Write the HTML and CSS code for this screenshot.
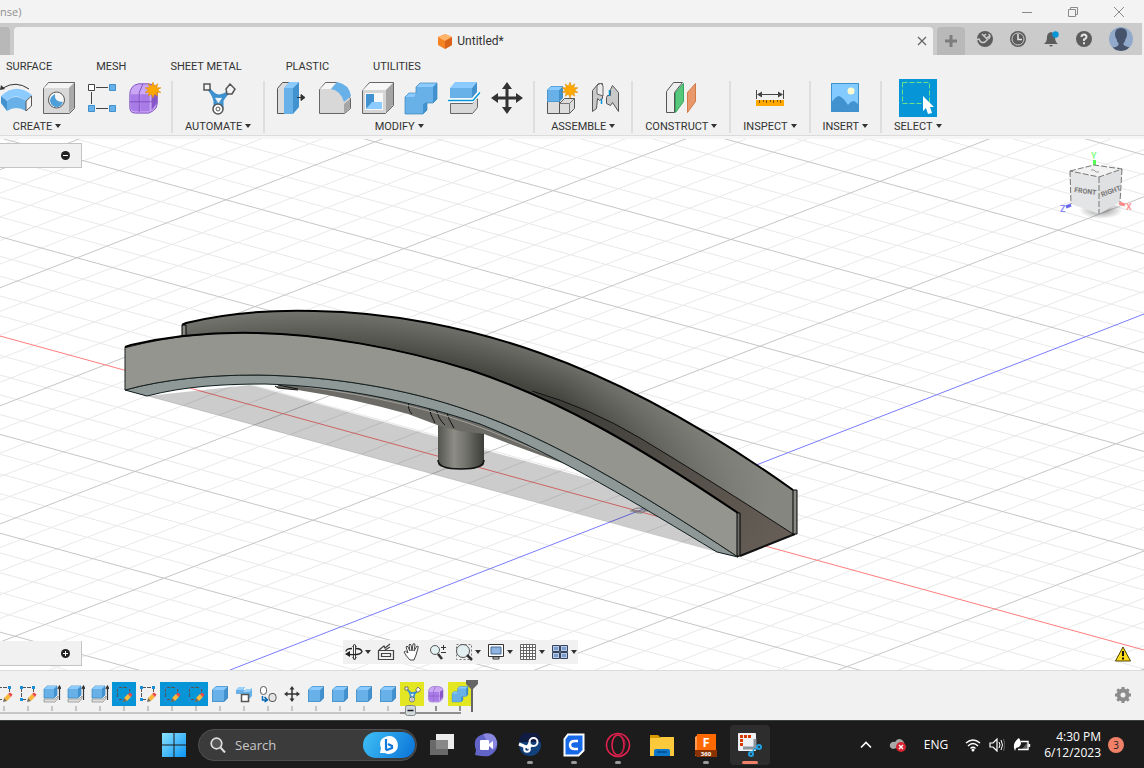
FILE: index.html
```html
<!DOCTYPE html>
<html lang="en">
  <head>
    <meta charset="UTF-8" />
    <meta name="viewport" content="width=device-width, initial-scale=1.0" />
    <title>Untitled*</title>
    <link rel="stylesheet" href="styles.css">
  </head>

  <body>
    <!-- shared icon shapes -->
    <svg class="defs" width="0" height="0" aria-hidden="true">
      <defs>
        <linearGradient id="winGrad" x1="0" y1="0" x2="1" y2="1">
          <stop offset="0" stop-color="#8be4ff" />
          <stop offset="1" stop-color="#0a93f5" />
        </linearGradient>
        <symbol id="star" viewBox="0 0 16 16">
          <path d="M8 0l1.500 4.200L12.800 1.800 11.700 5.800 16 5.700 12.600 8 16 10.500 11.700 10.300 12.900 14.200 9.500 12 8 16 6.500 12 3.200 14.200 4.300 10.300 0 10.500 3.400 8 0 5.700 4.300 5.800 3.200 1.800 6.500 4.200z" fill="#ffa800" stroke="#d98a00" stroke-width=".5" />
        </symbol>
        <symbol id="cube" viewBox="0 0 16 16">
          <path d="M0 4l4-4h12l-4 4z" fill="#8ccbff" />
          <path d="M12 4l4-4v12l-4 4z" fill="#4192ce" />
          <path d="M0 4h12v12H0z" fill="#67b0e8" />
          <path d="M.5 4L4 .5h11.500V12L12 15.500H.5z" fill="none" stroke="#3a86bf" stroke-width=".6" />
        </symbol>
        <symbol id="combine" viewBox="0 0 36 36">
          <path d="M2 17l4-4h7V7l4-4h17v16l-4 4h-6v7l-4 4H2z" fill="#67b0e8" />
          <path d="M2 17l4-4h7l-2 4zM13 7l4-4h17l-4 4z" fill="#8ccbff" />
          <path d="M30 7l4-4v16l-4 4zM20 24l4-2v8l-4 4z" fill="#4192ce" />
          <path d="M2 17l4-4h7V7l4-4h17v16l-4 4h-6v7l-4 4H2z" fill="none" stroke="#3b86bd" stroke-width=".7" />
        </symbol>
        <symbol id="form" viewBox="0 0 36 36">
          <path d="M3 14q0-9 9-11h11q9 1 9 8v13q0 5-5 8l-4 2H9q-6 0-6-6z" fill="#caa6f5" stroke="#7b4fc0" />
          <path d="M4 14h9v18H9q-5 0-5-5zM14 14h10v18H14z" fill="#a97be6" />
          <path d="M26 13l6-3v13l-6 8z" fill="#8858ca" />
          <path d="M3 22h22l7-4M13 33V12l4-9" fill="none" stroke="#7b4fc0" />
        </symbol>
        <symbol id="branch" viewBox="0 0 36 36">
          <path d="M8 8q6 8 11 8t11-5q-7 6-8 10v7h-7v-7q-1-6-7-13z" fill="#5aa9e2" stroke="#3c90cd" stroke-width="3" stroke-linejoin="round" />
          <path d="M15 18h7l-3.500 5z" fill="#f1f1f1" />
          <path d="M4 4h6v6H4zM30 4l5 5-3 5h-5l-1-5z" fill="#f5f5f5" stroke="#555" stroke-width="1.500" />
          <circle cx="18" cy="29" r="5" fill="#fff" stroke="#555" stroke-width="1.500" />
          <circle cx="18" cy="29" r="2" fill="none" stroke="#555" />
        </symbol>
        <symbol id="move" viewBox="0 0 36 36">
          <path d="M18 2l5 7h-3.500v7.500H27V13l7 5-7 5v-3.500h-7.500V27H23l-5 7-5-7h3.500v-7.500H9V23l-7-5 7-5v3.500h7.500V9H13z" fill="#333" />
        </symbol>
        <symbol id="sketch" viewBox="0 0 18 18">
          <path d="M3 2.500h11M2.500 3v11M3 14.500h5M14.500 3v5" fill="none" stroke="#555" stroke-dasharray="4 1" />
          <path d="M1 1h3v3H1zM13 1h3v3h-3zM1 13h3v3H1z" class="pt" />
          <path d="M9 13l4-4 3 3-4 4z" fill="#fbb93c" />
          <path d="M13 9l2-1.500 2.500 2L16 12z" fill="#f04848" />
          <path d="M9 13l-1 4 4-1z" fill="#7a6a50" />
        </symbol>
        <symbol id="extrude" viewBox="0 0 18 18">
          <path d="M1 14h11l3-3v2l-3 4H1z" fill="#ddd" stroke="#888" stroke-width=".7" />
          <path d="M1 4l3-3h10v9l-3 3H1z" fill="#67b0e8" stroke="#3b86bd" stroke-width=".7" />
          <path d="M1 4l3-3h10l-3 3z" fill="#8ccbff" />
          <path d="M11 4l3-3v9l-3 3z" fill="#4192ce" />
          <path d="M16.500 15V2M14.800 4l1.700-3 1.500 3" fill="none" stroke="#333" stroke-width="1.200" />
        </symbol>
      </defs>
    </svg>

    <header class="titlebar">
      <span class="window-title">nse)</span>
      <button class="win-btn" aria-label="Minimize"><svg width="12" height="12" viewBox="0 0 12 12"><path d="M1 6.500h10" /></svg></button>
      <button class="win-btn" aria-label="Restore"><svg width="12" height="12" viewBox="0 0 12 12"><path d="M1.500 3.500h7v7h-7zM3.500 3V1.500h7v7H9" /></svg></button>
      <button class="win-btn" aria-label="Close"><svg width="12" height="12" viewBox="0 0 12 12"><path d="M1 1l10 10M11 1L1 11" /></svg></button>
    </header>

    <nav class="doc-tabs">
      <div class="tab-back"></div>
      <div class="tab-active">
        <span class="tab-name">
          <svg width="16" height="16" viewBox="0 0 16 16">
            <path d="M8 1l7 3v8l-7 4-7-4V4z" fill="#f58220" />
            <path d="M8 1l7 3-7 4-7-4z" fill="#ffb36b" />
            <path d="M8 8l7-4v8l-7 4z" fill="#d9631a" />
          </svg>
          Untitled*
        </span>
        <button class="tab-close" aria-label="Close tab"><svg width="10" height="10" viewBox="0 0 10 10"><path d="M1 1l8 8M9 1L1 9" stroke="#666" stroke-width="1.300" /></svg></button>
      </div>
      <button class="tab-new" aria-label="New tab"><svg width="14" height="14" viewBox="0 0 14 14"><path d="M7 1v12M1 7h12" stroke="#7d7d7d" stroke-width="3" /></svg></button>
      <div class="tab-tools">
        <button aria-label="Extensions"><svg width="18" height="18" viewBox="0 0 18 18"><circle cx="9" cy="9" r="8" fill="#5c5c5c" /><path d="M0 10l3-1q2 5 6 3l3-3M6 4l6 6M12.500 9q3-3 0-5M7.500 6.500L10 4M10 9l3-3" fill="none" stroke="#cbcbcb" stroke-width="1.500" /></svg></button>
        <button aria-label="Job status"><svg width="18" height="18" viewBox="0 0 18 18"><circle cx="9" cy="9" r="8" fill="#5c5c5c" /><circle cx="9" cy="9" r="6" fill="none" stroke="#cbcbcb" /><path d="M9 4v5.500h4" fill="none" stroke="#e4e4e4" stroke-width="1.500" /></svg></button>
        <button aria-label="Notifications"><svg width="18" height="18" viewBox="0 0 18 18"><path d="M2 14q3-2 3-7 0-4 4-5 4 1 4 5 0 5 3 7zM7 15h4l-2 2z" fill="#5c5c5c" /><circle cx="13.500" cy="4.500" r="3.200" fill="#0696d7" /></svg></button>
        <button aria-label="Help"><svg width="18" height="18" viewBox="0 0 18 18"><circle cx="9" cy="9" r="8" fill="#5c5c5c" /><path d="M6.500 7q0-2.500 2.500-2.500T11.500 7Q11.500 8.500 9 9.500v1.500M9 12.200v2" fill="none" stroke="#e4e4e4" stroke-width="2" /></svg></button>
        <button class="avatar" aria-label="Account"><svg width="24" height="24" viewBox="0 0 24 24"><path d="M12 1q6 0 6 6 0 3-1.500 5-.5 3-2 4v2q4 2 6 2.500Q17 24 12 24t-8.500-3.500Q8 20 9.500 18v-2q-1.500-1-2-4Q6 10 6 7q0-6 6-6z" fill="#46536a" /></svg></button>
      </div>
    </nav>

    <nav class="ribbon-tabs">
      <a href="#surface">SURFACE</a>
      <a href="#mesh">MESH</a>
      <a href="#sheet-metal">SHEET METAL</a>
      <a href="#plastic">PLASTIC</a>
      <a href="#utilities">UTILITIES</a>
    </nav>

    <div class="ribbon">
      <section class="group group-create">
        <div class="tools">
          <button aria-label="Revolve"><svg width="36" height="36" viewBox="0 0 36 36">
            <path d="M3 16Q18 2 34 15l-6 6Q17 12 9 21z" fill="#8ccbff" />
            <path d="M9 21q8-8 19 0v10q-10-6-19 0z" fill="#67b0e8" />
            <path d="M3 16l6 5v10l-6-8z" fill="#4192ce" />
            <path d="M28 21l5.500-5v10L28 31z" fill="#f5f5f5" stroke="#555" />
            <path d="M5 8q13-8 26 1" fill="none" stroke="#333" /><path d="M2 10l1-5 4 4z" fill="#333" />
          </svg></button>
          <button aria-label="Hole"><svg width="36" height="36" viewBox="0 0 36 36">
            <path d="M2.500 8.500l5-6h26v26l-5 5h-26z" fill="#d8d8d8" stroke="#666" />
            <path d="M3 8l5-5h25l-5 5z" fill="#f4f4f4" /><path d="M28 8l5-5v25l-5 5z" fill="#aaa" />
            <circle cx="15.500" cy="20" r="8" fill="#f5f5f5" stroke="#555" />
            <path d="M14 14q-1 8 8 8-2 6-8 5-5-2-5-7 1-4 5-6z" fill="#4d9fda" />
          </svg></button>
          <button aria-label="Rectangular pattern"><svg width="36" height="36" viewBox="0 0 36 36">
            <path d="M12 7.500h12M12 28.500h12M7.500 12v12" stroke="#444" />
            <path d="M4.500 4.500h6v6h-6z" fill="#fff" stroke="#444" />
            <path d="M25.500 4.500h6v6h-6zM25.500 25.500h6v6h-6zM4.500 25.500h6v6h-6z" fill="#67b0e8" stroke="#3c90cd" />
          </svg></button>
          <button aria-label="Create form"><svg width="36" height="36" viewBox="0 0 36 36"><use href="#form" width="34" height="36" /><use href="#star" x="18" y="2" width="16" height="16" /></svg></button>
        </div>
        <button class="menu">CREATE</button>
      </section>

      <section class="group">
        <div class="tools">
          <button aria-label="Automated modeling"><svg width="36" height="36" viewBox="0 0 36 36"><use href="#branch" /></svg></button>
        </div>
        <button class="menu">AUTOMATE</button>
      </section>

      <section class="group">
        <div class="tools">
          <button aria-label="Press pull"><svg width="36" height="36" viewBox="0 0 36 36">
            <path d="M3.500 8.500l5-6h7l-5 6v25h-7z" fill="#ddd" stroke="#555" />
            <path d="M10 8h9v26h-9z" fill="#67b0e8" /><path d="M10 8l5-6h10l-6 6z" fill="#8ccbff" /><path d="M19 8l6-6v25l-6 7z" fill="#4192ce" />
            <path d="M23 17.500h5M31 17.500l-4-3v6z" stroke="#333" fill="#333" />
          </svg></button>
          <button aria-label="Fillet"><svg width="36" height="36" viewBox="0 0 36 36">
            <path d="M2.500 9.500l6-7h11l14 16v10l-6 5h-25z" fill="#d8d8d8" stroke="#666" />
            <path d="M3 9l6-6h10l-5 6z" fill="#f6f6f6" /><path d="M27 24l6-5v9l-6 5z" fill="#a5a5a5" />
            <path d="M14 9l6-7q12 2 14 14l-7 6Q24 11 14 9z" fill="#67b0e8" />
          </svg></button>
          <button aria-label="Shell"><svg width="36" height="36" viewBox="0 0 36 36">
            <path d="M2.500 10.500l7-8h24v23l-8 8h-23z" fill="#d5d5d5" stroke="#666" />
            <path d="M3 10l7-7h23l-7 7z" fill="#f7f7f7" /><path d="M26 10l7-7v22l-7 8z" fill="#a5a5a5" />
            <path d="M5 13h18v17H5z" fill="#f7f7f7" /><path d="M6 14h8v8l-8 7z" fill="#4192ce" /><path d="M6 29l6-7h10v7z" fill="#8ccbff" />
          </svg></button>
          <button aria-label="Combine"><svg width="36" height="36" viewBox="0 0 36 36"><use href="#combine" /></svg></button>
          <button aria-label="Split body"><svg width="36" height="36" viewBox="0 0 36 36">
            <path d="M4 8h22v10H4z" fill="#67b0e8" /><path d="M4 8l5-6h22l-5 6z" fill="#8ccbff" /><path d="M26 8l5-6v10l-5 6z" fill="#4192ce" />
            <path d="M4.500 23.500h22l5-5v9l-5 6h-22z" fill="#d8d8d8" stroke="#666" />
            <path d="M2 20.500h25l7-8" fill="none" stroke="#fff" stroke-width="4" /><path d="M2 20.500h25l7-8" fill="none" stroke="#0696d7" stroke-width="1.500" />
          </svg></button>
          <button aria-label="Move"><svg width="36" height="36" viewBox="0 0 36 36"><use href="#move" /></svg></button>
        </div>
        <button class="menu">MODIFY</button>
      </section>

      <section class="group">
        <div class="tools">
          <button aria-label="New component"><svg width="36" height="36" viewBox="0 0 36 36">
            <path d="M3.500 21.500h12v12h-12zM15.500 23.500l5-5h10v10l-5 5h-10z" fill="#ddd" stroke="#555" />
            <path d="M15.500 23.500h10l5-5M25.500 23.500v10" fill="none" stroke="#777" />
            <use href="#cube" x="3" y="6" width="16" height="16" /><use href="#star" x="18" y="2" width="16" height="16" />
          </svg></button>
          <button aria-label="Joint"><svg width="36" height="36" viewBox="0 0 36 36">
            <path d="M5.500 10.500l6-7h4v15l-3 2-2-2-1 10-4 3z" fill="#c9c9c9" stroke="#555" />
            <path d="M10 6q4-5 6 0v10l-6-2z" fill="#ececec" stroke="#666" />
            <path d="M31.500 12.500l-6-7-2 4v6q-4-1-4 2v6l4 2 2-3 6 9z" fill="#c9c9c9" stroke="#555" />
            <path d="M14.500 19v5M22.500 10v6" stroke="#0696d7" stroke-width="1.500" />
          </svg></button>
        </div>
        <button class="menu">ASSEMBLE</button>
      </section>

      <section class="group">
        <div class="tools">
          <button aria-label="Offset plane"><svg width="36" height="36" viewBox="0 0 36 36">
            <path d="M3.500 11.500l7-9h9l-8 10v20h-8z" fill="#eee" stroke="#555" />
            <path d="M12.500 12.500l8-9v18l-8 11z" fill="#57c87b" stroke="#37a75d" /><path d="M24.500 12.500l8-9v18l-8 11z" fill="#e8986a" stroke="#d07a48" />
          </svg></button>
        </div>
        <button class="menu">CONSTRUCT</button>
      </section>

      <section class="group">
        <div class="tools">
          <button aria-label="Measure"><svg width="36" height="36" viewBox="0 0 36 36">
            <path d="M4.500 10v9M31.500 10v9M6 14.500h24" stroke="#444" /><path d="M5 14.500l5-3v6zM31 14.500l-5-3v6z" fill="#444" />
            <path d="M4 20h28v6H4z" fill="#ffa800" /><path d="M7.500 20v3M11.500 20v2M14.500 20v3M18.500 20v2M21.500 20v3M25.500 20v2M28.500 20v3" stroke="#7b5200" />
          </svg></button>
        </div>
        <button class="menu">INSPECT</button>
      </section>

      <section class="group">
        <div class="tools">
          <button aria-label="Insert image"><svg width="36" height="36" viewBox="0 0 36 36">
            <path d="M4 3h28v29H4z" fill="#82caff" /><circle cx="24" cy="11" r="3.500" fill="#fffbd0" />
            <path d="M4 23q5-7 8-7 4 1 9 9 2-3 5-4 3 0 6 5v6H4z" fill="#4192ce" /><path d="M4.500 3.500h27v28h-27z" fill="none" stroke="#3e92cc" />
          </svg></button>
        </div>
        <button class="menu">INSERT</button>
      </section>

      <section class="group">
        <div class="tools">
          <button class="active" aria-label="Select"><svg width="38" height="38" viewBox="0 0 38 38">
            <path d="M3.500 3.500h27v21h-27z" fill="none" stroke="#6fe08a" stroke-dasharray="5 2" />
            <path d="M24 17v15l3-3 2 6 4-1-2-6h4z" fill="#fff" />
          </svg></button>
        </div>
        <button class="menu">SELECT</button>
      </section>
    </div>

    <main class="viewport">
      <svg class="scene" viewBox="0 139 1144 531" preserveAspectRatio="xMidYMid slice" role="img" aria-label="Curved channel model">
        <defs>
          <radialGradient id="innerWall" gradientUnits="userSpaceOnUse" cx="315" cy="1011" r="702">
            <stop offset=".94" stop-color="#464641" /><stop offset=".965" stop-color="#5a5a55" /><stop offset="1" stop-color="#757670" />
          </radialGradient>
          <linearGradient id="wallLight" gradientUnits="userSpaceOnUse" x1="560" y1="400" x2="780" y2="470">
            <stop offset="0" stop-color="#85867f" stop-opacity="0" /><stop offset="1" stop-color="#85867f" />
          </linearGradient>
          <linearGradient id="floor" gradientUnits="userSpaceOnUse" x1="540" y1="395" x2="780" y2="540">
            <stop offset="0" stop-color="#3a3a36" /><stop offset="1" stop-color="#665e56" />
          </linearGradient>
          <linearGradient id="pillar">
            <stop offset="0" stop-color="#555550" /><stop offset=".35" stop-color="#8d8d86" /><stop offset=".6" stop-color="#73736d" /><stop offset="1" stop-color="#3c3c38" />
          </linearGradient>
        </defs>
        <g id="grid-minor" class="grid-minor"></g>
        <g id="grid-major" class="grid-major"></g>
        <path class="axis-x" d="M0 336L1144 650" />
        <path class="axis-z" d="M1144 314L230 670" />
        <path d="M147 396L250 385 655 497 718 552z" fill="#000" fill-opacity=".2" />
        <path d="M632 510q7-4 14 0l-4 3q-6 1-10-3zM630 511h18" fill="none" stroke="#777" />

        <!-- support arm and pillar -->
        <path d="M438 415h46v49q-2 5-23 5t-23-5z" fill="url(#pillar)" />
        <path d="M438 460q0 9 23 9t23-9" fill="none" stroke="#111" stroke-width="1.500" />
        <path d="M276 386L300 383 400 396 500 425 592 470 585 471Q520 448 484 434L460 431 440 426 408 414Q350 398 298 390L278 388z" fill="#6c6b66" />
        <path d="M275 386l3 2 20 2M278 385l20 4M584 471l-16-6M409 402q-2 7 3 12M429 406q1 9 6 17M436 408q2 11 9 17M446 410q2 9 8 18" fill="none" stroke="#111" />
        <path d="M300 386Q410 400 490 431L570 464" fill="none" stroke="#a2a19b" />
        <path d="M584 469l7 3-4 1z" fill="#111" />

        <!-- back wall -->
        <path d="M182 324l4-1C235 311 280 310 315 311 390 312 470 328 540 353 625 383 710 431 793 490L797 491V534L790 534 640 460 536 410 400 370 257 345 186 339z" fill="url(#innerWall)" />
        <path d="M540 353C625 383 710 431 793 490L797 491V534H790Q650 440 540 395z" fill="url(#wallLight)" />
        <path d="M532 391Q590 408 640 438 710 480 793 534L738 557V513Q640 450 532 391z" fill="url(#floor)" />
        <path class="edge" d="M532 391Q590 408 640 438 710 480 793 534" />
        <path class="edge bottom-edge" d="M795 534L740 556" />
        <path class="rim" d="M182 325l4-2C235 311 280 310 315 311 390 312 470 328 540 353 625 383 710 431 793 490" />
        <path d="M182 325h4v14h-4zM793 490h4v44h-4z" fill="#888983" stroke="#000" />

        <!-- front wall -->
        <path d="M125 390C165 379 210 375 257 375 330 376 405 388 470 411 550 438 640 492 738 557L717 552C640 506 560 456 480 424 415 402 340 386 265 384 225 384 185 386 147 396z" fill="#8d9897" stroke="#101c1e" />
        <path d="M125 347L128 347C170 336 215 332 257 333 320 334 400 348 470 370 560 400 640 447 738 513V557C640 492 550 438 470 411 405 388 330 376 257 375 210 375 165 379 125 390z" fill="#94958f" stroke="#17201f" />
        <path class="rim" d="M125 347L131 345C170 336 215 332 257 333 320 334 400 348 470 370 560 400 640 447 738 513" />
        <path d="M737 513h3v43h-3z" fill="#6f706b" stroke="#000" />
      </svg>

      <div class="panel panel-top"><button aria-label="Collapse browser"><svg width="9" height="9" viewBox="0 0 9 9"><circle cx="4.500" cy="4.500" r="4.500" fill="#222" /><path d="M2 4.500h5" stroke="#fff" /></svg></button></div>
      <div class="panel panel-bottom"><button aria-label="Expand comments"><svg width="9" height="9" viewBox="0 0 9 9"><circle cx="4.500" cy="4.500" r="4.500" fill="#222" /><path d="M2 4.500h5M4.500 2v5" stroke="#fff" /></svg></button></div>

      <svg class="viewcube" width="80" height="76" viewBox="1056 148 80 76" role="img" aria-label="View cube">
        <defs>
          <radialGradient id="cubeShadow"><stop offset=".3" stop-color="#000" stop-opacity=".3" /><stop offset="1" stop-color="#000" stop-opacity="0" /></radialGradient>
        </defs>
        <ellipse cx="1101" cy="210" rx="22" ry="9" fill="url(#cubeShadow)" />
        <path d="M1094.500 160v6" stroke="#5f5" stroke-width="3" /><path d="M1066 207l5-2" stroke="#66e" stroke-width="3" /><path d="M1119 203l6 2" stroke="#f88" stroke-width="3" />
        <path d="M1070 171l24-6 28 4-23 8z" fill="#f2f2f2" /><path d="M1070 171l29 6v37l-28-10z" fill="#e4e5e6" /><path d="M1099 177l23-8-2 33-21 12z" fill="#dfe0e1" />
        <path d="M1070 171l24-6 28 4-23 8zM1070 171l1 33M1099 177v37M1122 169l-2 33" fill="none" stroke="#777" stroke-dasharray="6 2" />
        <path d="M1091 170h3l2 2h3" fill="none" stroke="#999" />
        <text x="1074" y="192" class="face" transform="rotate(8 1074 192)">FRONT</text>
        <text x="1102" y="197" class="face" transform="rotate(-20 1102 197)">RIGHT</text>
        <text x="1091" y="159" class="axis-name" fill="#8f8">Y</text>
        <text x="1060" y="212" class="axis-name" fill="#88f">Z</text>
        <text x="1126" y="210" class="axis-name" fill="#f99">X</text>
      </svg>

      <div class="navbar">
        <button class="drop" aria-label="Orbit"><svg width="18" height="18" viewBox="0 0 18 18"><path d="M8.500 2v14h2V2M7.500 4l2-3 2 3M7.500 14l2 3 2-3" fill="#fff" stroke="#444" /><path d="M4 11.500q12 1 13-3-1-3-6-3M7 5.500q-6 0-6 3" fill="none" stroke="#222" stroke-width="1.300" /><path d="M0 11l5-3v6z" fill="#222" /></svg></button>
        <button aria-label="Look at"><svg width="18" height="18" viewBox="0 0 18 18"><path d="M1.500 7.500h15v9h-15zM4.500 10.500h9v3h-9zM2 7l5-4 1 2 5-4M8 7l5-3" fill="none" stroke="#444" stroke-width="1.200" /></svg></button>
        <button aria-label="Pan"><svg width="18" height="18" viewBox="0 0 18 18"><path d="M7 17Q3 13 1 9q1-2 4 1L3 4q1-2 2 0l2 4-1-6q1-2 2 0l1 6 1-7q2-1 2 1l-1 6 3-5q2 0 1 2l-2 7-2 5z" fill="#fff" stroke="#444" /></svg></button>
        <button aria-label="Zoom"><svg width="18" height="18" viewBox="0 0 18 18"><circle cx="6" cy="7" r="4.500" fill="#e3f0f2" stroke="#555" /><path d="M9 11l4 5" stroke="#333" stroke-width="2.500" /><path d="M12 4.500h5M14.500 2v5M12 9.500h5" stroke="#333" /></svg></button>
        <button class="drop" aria-label="Fit"><svg width="18" height="18" viewBox="0 0 18 18"><path d="M1.500 1.500h15v15h-15z" fill="none" stroke="#777" stroke-dasharray="2 2" /><circle cx="8" cy="8" r="6.500" fill="#e3f0f2" stroke="#555" /><path d="M12 12l5 5" stroke="#333" stroke-width="2.500" /></svg></button>
        <button class="drop" aria-label="Display settings"><svg width="18" height="18" viewBox="0 0 18 18"><path d="M1.500 1.500h15v12h-15z" fill="#fff" stroke="#333" /><path d="M4 4h10v7H4z" fill="#8eb4e2" stroke="#4a6a96" /><path d="M6 14h6v2H6z" fill="#eee" stroke="#333" /></svg></button>
        <button class="drop" aria-label="Grid settings"><svg width="18" height="18" viewBox="0 0 18 18"><path d="M1.500 1.500h15v15h-15zM4.500 1v16M7.500 1v16M10.500 1v16M13.500 1v16M1 4.500h16M1 7.500h16M1 10.500h16M1 13.500h16" fill="#fff" stroke="#666" /></svg></button>
        <button class="drop" aria-label="Viewports"><svg width="18" height="18" viewBox="0 0 18 18"><path d="M1.500 2.500h7v6h-7zM9.500 2.500h7v6h-7zM1.500 9.500h7v6h-7zM9.500 9.500h7v6h-7z" fill="#b8cdea" stroke="#33435c" /><path d="M3 4h4v3H3zM11 4h4v3h-4zM3 11h4v3H3zM11 11h4v3h-4z" fill="#7d9ccb" /></svg></button>
      </div>

      <button class="warning" aria-label="Warning"><svg width="18" height="16" viewBox="0 0 18 16"><path d="M9 1l7.500 14h-15z" fill="#ffdc1c" stroke="#4d4300" stroke-linejoin="round" /><path d="M9 5v5M9 11.500v2" stroke="#111" stroke-width="2" /></svg></button>
    </main>

    <section class="timeline">
      <div class="features">
        <button aria-label="Sketch"><svg width="18" height="18"><use href="#sketch" /></svg></button>
        <button aria-label="Sketch"><svg width="18" height="18"><use href="#sketch" /></svg></button>
        <button aria-label="Extrude"><svg width="18" height="18"><use href="#extrude" /></svg></button>
        <button aria-label="Extrude"><svg width="18" height="18"><use href="#extrude" /></svg></button>
        <button aria-label="Extrude"><svg width="18" height="18"><use href="#extrude" /></svg></button>
        <button class="picked" aria-label="Sketch"><svg width="18" height="18"><use href="#sketch" /></svg></button>
        <button aria-label="Sketch"><svg width="18" height="18"><use href="#sketch" /></svg></button>
        <button class="picked" aria-label="Sketch"><svg width="18" height="18"><use href="#sketch" /></svg></button>
        <button class="picked" aria-label="Sketch"><svg width="18" height="18"><use href="#sketch" /></svg></button>
        <button aria-label="Body"><svg width="16" height="16"><use href="#cube" /></svg></button>
        <button aria-label="Copy body"><svg width="18" height="18" viewBox="0 0 18 18"><path d="M1 5l3-3h6l-2 3h6l3-2v8l-3 3H6V9H1z" fill="#67b0e8" /><path d="M1 5l3-3h6L7 5zM8 7l3-3h6l-3 3z" fill="#9ad2ff" /><path d="M6.500 9.500h7v7h-7z" fill="#fff" stroke="#555" stroke-width="1.500" /></svg></button>
        <button aria-label="Align"><svg width="18" height="18" viewBox="0 0 18 18"><rect x="1.500" y="1.500" width="6" height="8" rx="3" fill="#fff" stroke="#555" /><rect x="10" y="8.500" width="7" height="8" rx="3" fill="#e4e4e4" stroke="#555" /><path d="M3.500 11v4H7M5.500 12l3 3-3 2" fill="none" stroke="#0066b3" stroke-width="1.500" /></svg></button>
        <button aria-label="Move"><svg width="18" height="18"><use href="#move" /></svg></button>
        <button aria-label="Body"><svg width="16" height="16"><use href="#cube" /></svg></button>
        <button aria-label="Body"><svg width="16" height="16"><use href="#cube" /></svg></button>
        <button aria-label="Body"><svg width="16" height="16"><use href="#cube" /></svg></button>
        <button aria-label="Body"><svg width="16" height="16"><use href="#cube" /></svg></button>
        <button class="warn recent" aria-label="Automated modeling"><svg width="18" height="18"><use href="#branch" /></svg></button>
        <button class="recent" aria-label="Form"><svg width="18" height="18"><use href="#form" /></svg></button>
        <button class="warn recent last" aria-label="Combine"><svg width="18" height="18"><use href="#combine" /></svg></button>
        <svg class="group-toggle" width="11" height="11" viewBox="0 0 11 11"><rect x=".5" y=".5" width="10" height="10" rx="2" fill="#d0d8dc" stroke="#888" /><path d="M2.500 5.500h6" stroke="#222" stroke-width="1.500" /></svg>
        <svg class="playhead" width="12" height="32" viewBox="0 0 12 32"><path d="M0 0h12v4L7 9v23H5V9L0 4z" fill="#666" /></svg>
      </div>
      <button class="settings" aria-label="Timeline settings"><svg width="18" height="18" viewBox="0 0 18 18"><circle cx="9" cy="9" r="4.500" fill="none" stroke="#8c8c8c" stroke-width="4" /><path d="M9 1v3M9 14v3M1 9h3M14 9h3M3.300 3.300l2 2M12.700 12.700l2 2M3.300 14.700l2-2M12.700 5.300l2-2" stroke="#8c8c8c" stroke-width="3" /></svg></button>
    </section>

    <footer class="taskbar">
      <button class="start" aria-label="Start"><svg width="24" height="24" viewBox="0 0 24 24"><path d="M0 0h11.500v11.500H0zM12.500 0H24v11.500H12.500zM0 12.500h11.500V24H0zM12.500 12.500H24V24H12.500z" fill="url(#winGrad)" /></svg></button>
      <label class="search">
        <svg width="16" height="16" viewBox="0 0 16 16"><circle cx="6.500" cy="6.500" r="5.300" fill="#555" stroke="#ddd" stroke-width="1.700" /><path d="M10.500 10.500l4.500 5" stroke="#ddd" stroke-width="2" /></svg>
        <input type="text" placeholder="Search" aria-label="Search" />
        <span class="bing"><svg width="20" height="20" viewBox="0 0 20 20"><path d="M1 18l1-5Q-1 5 6 2q8-3 12 4 3 8-4 12-5 2-8 0z" fill="#fff" /><path d="M7 4v10l1 1 5-2v-2l-4-2" fill="none" stroke="#1479dd" stroke-width="2.200" /></svg></span>
      </label>
      <div class="apps">
        <button aria-label="Task view"><svg width="24" height="24" viewBox="0 0 24 24"><path d="M6 1h18v15H6z" fill="#ececec" /><path d="M0 7h18v15H0z" fill="#777" fill-opacity=".85" /></svg></button>
        <button aria-label="Chat"><svg width="24" height="24" viewBox="0 0 24 24"><path d="M1 22l1-5Q-2 6 7 2q12-4 16 6 2 10-8 15-4 1-14-1z" fill="#6264c7" /><path d="M9 1q12-3 14 8 0 6-5 8z" fill="#8a87e0" /><rect x="6" y="7" width="9" height="10" rx="1" fill="#fff" /><path d="M15 11l4-3v8l-4-3z" fill="#fff" /></svg></button>
        <button class="running" aria-label="Steam"><svg width="24" height="24" viewBox="0 0 24 24"><circle cx="12" cy="12" r="11" fill="#12417c" /><path d="M1 9A11 11 0 0 1 23 9z" fill="#101c42" /><circle cx="15.500" cy="9" r="4" fill="none" stroke="#fff" stroke-width="2" /><circle cx="9" cy="16" r="2.800" fill="none" stroke="#fff" stroke-width="2" /><path d="M1 11l7 3M12 10l-3 5 5-3" stroke="#fff" stroke-width="3" /></svg></button>
        <button class="running" aria-label="Cura"><svg width="24" height="24" viewBox="0 0 24 24"><path d="M6 1.500h15.500v16l-5 5h-14V6z" fill="#1769e8" stroke="#fff" stroke-width="2" /><path d="M16 8h-3q-5 0-5 4t5 4h3" fill="none" stroke="#fff" stroke-width="2.500" /></svg></button>
        <button class="running" aria-label="Opera GX"><svg width="26" height="26" viewBox="0 0 26 26"><circle cx="13" cy="13" r="11.500" fill="none" stroke="#e0214e" stroke-width="1.600" /><ellipse cx="13" cy="13" rx="6" ry="10" fill="none" stroke="#e0214e" stroke-width="1.600" /><path d="M15 3q6 4 5 10t-5 10" fill="none" stroke="#b3183e" /></svg></button>
        <button aria-label="File Explorer"><svg width="24" height="24" viewBox="0 0 24 24"><path d="M0 2h8l2 2v5H0z" fill="#d99a00" /><path d="M0 5h9l2-1h13v19H0z" fill="#fdc93c" /><path d="M4 23v-5q0-2 2-2h12q2 0 2 2v5z" fill="#0c78cc" /><path d="M7 19h10" stroke="#064b8c" stroke-width="1.500" /></svg></button>
        <button class="running" aria-label="Fusion 360"><svg width="24" height="24" viewBox="0 0 24 24"><path d="M1 4l4-3v22H1z" fill="#ff9a55" /><path d="M3 1h19v16H3z" fill="#ff6a00" /><path d="M1 17h22v7H3l-2-2z" fill="#8a3300" /><text x="12" y="14" class="f-mark">F</text><text x="12" y="23" class="f-num">360</text></svg></button>
        <button class="running current" aria-label="Snipping Tool"><svg width="24" height="24" viewBox="0 0 24 24"><rect x="0" y="0" width="18" height="18" rx="1" fill="#eef1f4" /><path d="M3.500 13V3.500H13" fill="none" stroke="#d83b01" stroke-width="3" stroke-dasharray="3 1" /><path d="M5 15h12V6" fill="none" stroke="#8b949c" stroke-width="3" /><circle cx="21" cy="14" r="2" fill="none" stroke="#21a0e0" stroke-width="2" /><circle cx="13" cy="21" r="2" fill="none" stroke="#21a0e0" stroke-width="2" /><path d="M16 16l4-1M16 16l-2 4" stroke="#21a0e0" stroke-width="1.500" /></svg></button>
      </div>
      <div class="tray">
        <button aria-label="Hidden icons"><svg width="12" height="8" viewBox="0 0 12 8"><path d="M1 6.500l5-5 5 5" fill="none" stroke="#fff" stroke-width="1.600" /></svg></button>
        <button class="cloud" aria-label="OneDrive"><svg width="18" height="16" viewBox="0 0 18 16"><path d="M4 12Q0 11 1 7q2-3 5-2 3-5 7-2 3 2 2 6z" fill="#a8a8a8" /><circle cx="12" cy="10" r="5" fill="#d42430" /><path d="M10 8l4 4M14 8l-4 4" stroke="#fff" stroke-width="1.300" /></svg></button>
        <button class="lang">ENG</button>
        <button class="status" aria-label="Network, volume, battery">
          <svg width="16" height="14" viewBox="0 0 16 14"><path d="M1 5q7-6 14 0M3 8q5-5 10 0M5.500 10.500q2.500-2.500 5 0" fill="none" stroke="#fff" stroke-width="1.400" /><circle cx="8" cy="12" r="1.500" fill="#fff" /></svg>
          <svg width="16" height="14" viewBox="0 0 16 14"><path d="M1 5h3l4-4v12L4 9H1z" fill="none" stroke="#fff" stroke-width="1.200" /><path d="M10 4q2 3 0 6M12 2q3 5 0 10" fill="none" stroke="#fff" /><path d="M14.500 1q3 6 0 12" fill="none" stroke="#666" /></svg>
          <svg width="18" height="14" viewBox="0 0 18 14"><path d="M8 3.500h7v8H5M16.500 6v3" fill="none" stroke="#fff" stroke-width="1.400" /><path d="M1 10Q0 4 6 0q4 6 0 9l-3 1-1 3z" fill="#fff" /><path d="M9 11h5V5z" fill="#fff" opacity=".3" /></svg>
        </button>
        <button class="clock"><span>4:30 PM</span><span>6/12/2023</span></button>
        <span class="badge">3</span>
      </div>
    </footer>

    <script src="grid.js"></script>
  </body>
</html>
```
FILE: styles.css
```css
* {
  margin: 0;
  padding: 0;
  box-sizing: border-box;
}

body {
  display: flex;
  flex-direction: column;
  height: 100vh;
  overflow: hidden;
  background-color: #f1f1f1;
  color: #333;
  font-family: Roboto, sans-serif;
  font-size: 11px;
}

button {
  display: flex;
  align-items: center;
  justify-content: center;
  border: none;
  background: none;
  color: inherit;
  font: inherit;
}

svg {
  display: block;
  flex: none;
}

.defs {
  position: absolute;
}

/* window title */
.titlebar {
  display: flex;
  align-items: center;
  flex: none;
  height: 23px;
  padding-right: 2px;
  background-color: #f3f3f3;
}

.window-title {
  margin-right: auto;
  color: #8f8f8f;
  font-family: "Open Sans", sans-serif;
  font-size: 11px;
}

.win-btn {
  width: 46px;
  height: 20px;
}

.win-btn path {
  fill: none;
  stroke: #8a8a8a;
}

/* document tabs */
.doc-tabs {
  display: flex;
  align-items: flex-end;
  gap: 4px;
  flex: none;
  height: 32px;
  margin-right: 2px;
  background-color: #cbcbcb;
}

.tab-back {
  width: 10px;
  height: 28px;
  background-color: #b8b8b8;
  border-radius: 0 4px 0 0;
}

.tab-active {
  display: flex;
  align-items: center;
  flex: 1;
  height: 28px;
  padding: 0 6px 0 10px;
  background-color: #f1f1f1;
  border-radius: 4px 4px 0 0;
}

.tab-name {
  display: flex;
  align-items: center;
  justify-content: center;
  gap: 4px;
  flex: 1;
  font-size: 12px;
}

.tab-close {
  width: 10px;
  height: 20px;
}

.tab-new {
  width: 28px;
  height: 28px;
  background-color: #b9b9b9;
  border-radius: 4px 4px 0 0;
}

.tab-tools {
  display: flex;
  align-items: center;
  gap: 15px;
  height: 32px;
  padding: 0 9px 0 7px;
}

.tab-tools .avatar {
  width: 24px;
  height: 24px;
  margin-left: 1px;
  overflow: hidden;
  border-radius: 50%;
  background-color: #91a9cb;
}

/* ribbon */
.ribbon-tabs {
  display: flex;
  align-items: center;
  gap: 44px;
  flex: none;
  height: 23px;
  padding-left: 6px;
}

.ribbon-tabs a {
  color: #333;
  text-decoration: none;
}

.ribbon {
  display: flex;
  flex: none;
  height: 61px;
  padding-bottom: 2px;
  overflow: hidden;
  border-bottom: 3px solid #f6f6f6;
  box-shadow: inset 0 -1px #dcdcdc;
}

.group {
  display: flex;
  flex-direction: column;
  align-items: center;
  flex: none;
  padding: 0 5px;
  border-right: 2px solid transparent;
  border-image: linear-gradient(transparent 4px, #dedede 4px, #dedede 54px, transparent 54px) 1;
}

.group:last-child {
  border-image: none;
}

.group-create {
  width: 270px;
  margin-left: -97px;
}

.group-create .tools {
  align-self: flex-end;
}

.tools {
  display: flex;
}

.tools button {
  width: 43px;
  height: 40px;
}

.tools .active {
  width: 38px;
  height: 38px;
  margin: 1px 0;
  background-color: #0696d7;
}

.menu {
  height: 16px;
  padding: 0 7px;
  gap: 3px;
}

.menu::after,
.drop::after {
  content: "";
  border: 3px solid transparent;
  border-top: 4px solid #333;
  border-bottom: 0;
}

/* modelling canvas */
.viewport {
  position: relative;
  flex: 1;
  min-height: 0;
  overflow: hidden;
  background-color: #fff;
}

.scene {
  width: 100%;
  height: 100%;
}

.grid-minor {
  stroke: #e9e9e9;
}

.grid-major {
  stroke: #c6c6c6;
}

.axis-x {
  stroke: #ff7d7d;
}

.axis-z {
  stroke: #7b7bff;
}

.edge {
  fill: none;
  stroke: #111;
}

.bottom-edge {
  stroke-width: 2;
}

.rim {
  fill: none;
  stroke: #000;
  stroke-width: 2;
}

.panel {
  position: absolute;
  left: 0;
  display: flex;
  align-items: center;
  justify-content: flex-end;
  width: 82px;
  height: 25px;
  padding-right: 11px;
  border: 1px solid #c4c4c4;
  border-left: none;
  background-color: #f1f1f1;
}

.panel-top {
  top: 4px;
}

.panel-bottom {
  bottom: 4px;
  border-top: none;
}

.viewcube {
  position: absolute;
  top: 9px;
  right: 8px;
}

.face {
  fill: #777;
  font-size: 7px;
  font-weight: bold;
}

.axis-name {
  font-size: 9px;
  font-weight: bold;
}

.navbar {
  position: absolute;
  bottom: 6px;
  left: 30%;
  display: flex;
  align-items: center;
  gap: 8px;
  height: 24px;
  padding: 0 3px 0 2px;
  background-color: #f1f1f1;
}

.navbar .drop {
  gap: 2px;
  margin-right: -2px;
}

.warning {
  position: absolute;
  right: 12px;
  bottom: 8px;
}

/* timeline */
.timeline {
  display: flex;
  align-items: flex-start;
  justify-content: space-between;
  flex: none;
  height: 50px;
  padding-right: 12px;
  border-top: 1px solid #dcdcdc;
}

.features {
  position: relative;
  display: flex;
  margin: 11px 0 0 -8px;
}

.features button {
  width: 24px;
  height: 24px;
  position: relative;
}

/* tick and rail under each feature */
.features button::after {
  content: "";
  position: absolute;
  top: 24px;
  left: 0;
  width: 24px;
  height: 6px;
  border-bottom: 2px solid #c6c6c6;
  background: linear-gradient(#c6c6c6, #c6c6c6) 11px 0 / 2px 5px no-repeat;
}

.features .recent::after {
  border-color: #8f8f8f;
  background: linear-gradient(#8f8f8f, #8f8f8f) 11px 0 / 2px 5px no-repeat;
}

.features .last::after {
  width: 13px;
}

.pt {
  fill: #1a8fdc;
}

.features .picked {
  background-color: #0696d7;
}

.features .warn {
  background-color: #e3e622;
}

.group-toggle {
  position: absolute;
  top: 23px;
  right: 56px;
}

.playhead {
  position: absolute;
  top: -2px;
  right: -6px;
}

.settings {
  margin-top: 15px;
}

/* windows taskbar */
.taskbar {
  display: flex;
  align-items: center;
  flex: none;
  height: 48px;
  padding: 0 20px 0 162px;
  border-top: 1px solid #3a3f3f;
  background-color: #1c1c1c;
  color: #fff;
  font-family: "Open Sans", sans-serif;
  font-size: 12px;
}

.search {
  display: flex;
  align-items: center;
  gap: 9px;
  width: 219px;
  height: 32px;
  margin-left: 12px;
  padding: 0 1px 0 11px;
  border: 1px solid #505050;
  border-radius: 16px;
  background-color: #3b3b3b;
}

.search input {
  flex: 1;
  min-width: 0;
  border: none;
  outline: none;
  background: none;
  color: #fff;
  font-family: inherit;
  font-size: 13px;
}

.search input::placeholder {
  color: #c8c8c8;
}

.bing {
  display: flex;
  align-items: center;
  justify-content: center;
  width: 52px;
  height: 26px;
  border-radius: 13px;
  background: linear-gradient(120deg, #3fc1f5, #0a72d8);
}

.apps {
  display: flex;
  gap: 4px;
  margin-left: 5px;
}

.apps button {
  position: relative;
  width: 40px;
  height: 40px;
  border-radius: 4px;
}

.apps .running::after {
  content: "";
  position: absolute;
  bottom: 1px;
  width: 6px;
  height: 3px;
  border-radius: 2px;
  background-color: #9a9a9a;
}

.apps .current {
  background-color: #2d2d2d;
}

.apps .current::after {
  width: 16px;
  background-color: #f08068;
}

.f-mark,
.f-num {
  fill: #fff;
  font-weight: bold;
  text-anchor: middle;
}

.f-mark {
  font-size: 13px;
}

.f-num {
  font-size: 6px;
}

.tray {
  display: flex;
  align-items: center;
  gap: 17px;
  margin-left: auto;
}

.status {
  gap: 8px;
}

.clock {
  flex-direction: column;
  align-items: flex-end;
  margin-left: -4px;
  line-height: 16px;
}

.badge {
  width: 16px;
  height: 16px;
  margin-left: -10px;
  border-radius: 50%;
  background-color: #f08068;
  color: #222;
  font-size: 10px;
  line-height: 16px;
  text-align: center;
}
```
FILE: grid.js
```js
// Ground grid: two families of parallel lines around the origin
const origin = { x: 640, y: 511 };
const stepX = { x: 178, y: 48.8 };
const stepZ = { x: -149, y: 58 };
const divisions = 5;
const reach = 8;

const minor = document.getElementById("grid-minor");
const major = document.getElementById("grid-major");

function addLine(from, along, offset, parent) {
  const line = document.createElementNS("http://www.w3.org/2000/svg", "line");
  const cx = origin.x + from.x * offset;
  const cy = origin.y + from.y * offset;
  line.setAttribute("x1", cx - along.x * reach);
  line.setAttribute("y1", cy - along.y * reach);
  line.setAttribute("x2", cx + along.x * reach);
  line.setAttribute("y2", cy + along.y * reach);
  parent.appendChild(line);
}

for (let i = -reach * divisions; i <= reach * divisions; i++) {
  // the two axis lines are drawn separately
  if (i === 0) continue;
  const parent = i % divisions === 0 ? major : minor;
  addLine(stepX, stepZ, i / divisions, parent);
  addLine(stepZ, stepX, i / divisions, parent);
}
```
